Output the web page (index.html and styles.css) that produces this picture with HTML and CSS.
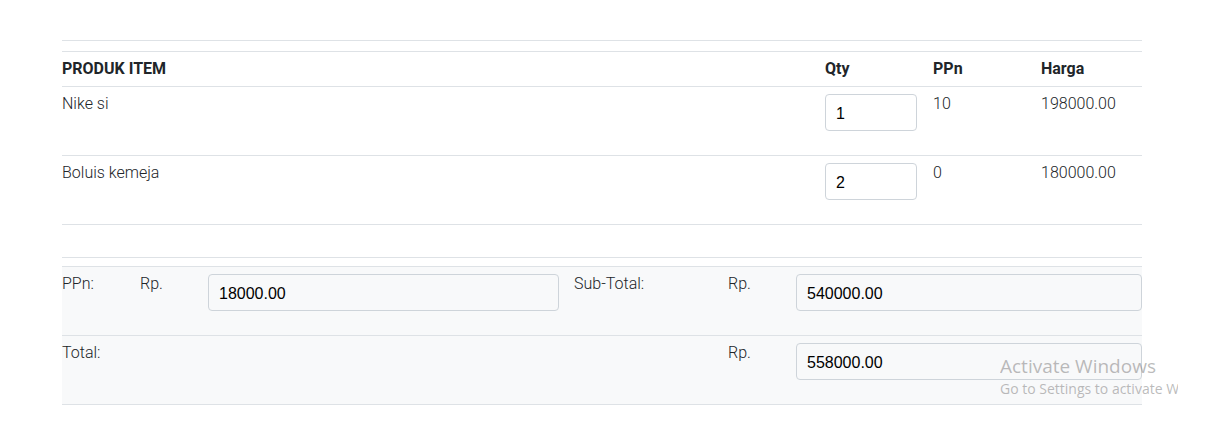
FILE: index.html
```html
<!DOCTYPE html>
<html lang="id">
<head>
<meta charset="utf-8">
<title>Keranjang</title>
<link rel="stylesheet" href="styles.css">
</head>
<body>
<div class="page">
  <div class="topline"></div>
  <div class="items">
    <div class="row head">
      <div>PRODUK ITEM</div>
      <div>Qty</div>
      <div>PPn</div>
      <div>Harga</div>
    </div>
    <div class="row item">
      <div>Nike si</div>
      <div><input class="qty" type="text" value="1"></div>
      <div>10</div>
      <div>198000.00</div>
    </div>
    <div class="row item">
      <div>Boluis kemeja</div>
      <div><input class="qty" type="text" value="2"></div>
      <div>0</div>
      <div>180000.00</div>
    </div>
  </div>
  <div class="spacer"></div>
  <div class="sep"></div>
  <div class="summary">
    <div class="srow">
      <div>PPn:</div>
      <div>Rp.</div>
      <div><input class="amount short" type="text" value="18000.00"></div>
      <div>Sub-Total:</div>
      <div>Rp.</div>
      <div><input class="amount" type="text" value="540000.00"></div>
    </div>
    <div class="srow">
      <div>Total:</div>
      <div></div>
      <div></div>
      <div></div>
      <div>Rp.</div>
      <div><input class="amount" type="text" value="558000.00"></div>
    </div>
  </div>
</div>
<div class="watermark">
  <div class="wm-title">Activate Windows</div>
  <div class="wm-sub">Go to Settings to activate Windows.</div>
</div>
</body>
</html>
```

FILE: styles.css
```css
html, body {
  margin: 0;
  padding: 0;
  background: #ffffff;
}

body {
  font-family: Roboto, "Liberation Sans", sans-serif;
  font-size: 16px;
  font-weight: 300;
  color: #212529;
  line-height: 19px;
}

.page {
  width: 1080px;
  padding: 40px 0 0 62px;
}

.topline {
  border-top: 1px solid #dee2e6;
  height: 10px;
}

.row {
  display: grid;
  grid-template-columns: 763px 108px 108px 1fr;
  border-top: 1px solid #dee2e6;
}

.head {
  font-weight: 700;
  padding: 7px 0 8px;
}

.item {
  padding: 7px 0 24px;
}

.spacer {
  border-top: 1px solid #dee2e6;
  height: 32px;
}

.sep {
  border-top: 1px solid #dee2e6;
  height: 8px;
}

.summary {
  background: #f8f9fa;
  border-bottom: 1px solid #dee2e6;
}

.srow {
  display: grid;
  grid-template-columns: 78px 68px 366px 154px 68px 1fr;
  border-top: 1px solid #dee2e6;
  padding: 7px 0 24px;
}

input {
  box-sizing: border-box;
  display: block;
  height: 37px;
  margin: 0;
  padding: 2px 10px 0;
  border: 1px solid #ced4da;
  border-radius: 4px;
  font-family: "Liberation Sans", Arial, sans-serif;
  font-size: 16px;
  color: #000;
  outline: none;
}

.qty {
  width: 92px;
  background: #ffffff;
}

.amount {
  width: 100%;
  background: #f8f9fa;
}

.amount.short {
  width: 351px;
}

.watermark {
  position: absolute;
  left: 1000px;
  top: 354px;
  width: 178px;
  overflow: hidden;
  white-space: nowrap;
  font-family: "Open Sans", "Noto Sans", sans-serif;
  font-weight: 400;
  color: rgba(120, 120, 120, 0.5);
}

.wm-title {
  font-size: 19px;
  line-height: 25px;
}

.wm-sub {
  font-size: 14px;
  line-height: 20px;
}
```
